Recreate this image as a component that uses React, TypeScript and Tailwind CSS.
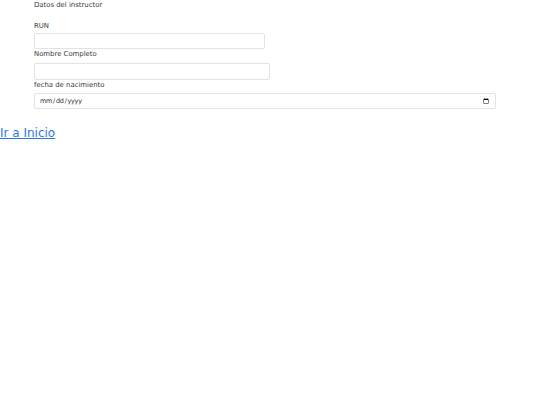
import React from "react";

export default function App() {
  return (
    <div className="bg-white min-h-[405px] w-[540px]" style={{ fontFamily: '"DejaVu Sans", sans-serif' }}>
      <div className="pl-[34px] pt-[1px] text-[6.9px] leading-[9px] text-[#3a3a3a]">
        <div className="h-[20px]">Datos del instructor</div>
        <div className="h-[12px] pt-[1px]">RUN</div>
        <input
          type="text"
          className="block w-[231px] h-[16px] border border-[#e3e3e3] rounded-[2px] outline-none"
        />
        <div className="h-[14px] pt-[1px]">Nombre Completo</div>
        <input
          type="text"
          className="block w-[236px] h-[17px] border border-[#e3e3e3] rounded-[2px] outline-none"
        />
        <div className="h-[13px] pt-[1px]">fecha de nacimiento</div>
        <input
          type="date"
          className="block w-[462px] h-[16px] border border-[#e3e3e3] rounded-[2px] px-[4px] text-[6.5px] tracking-[-0.3px] text-[#333] outline-none"
        />
      </div>
      <div className="mt-[11px]">
        <a href="#" className="text-[12px] leading-[14px] text-[#2a7ae2] underline">
          Ir a Inicio
        </a>
      </div>
    </div>
  );
}
